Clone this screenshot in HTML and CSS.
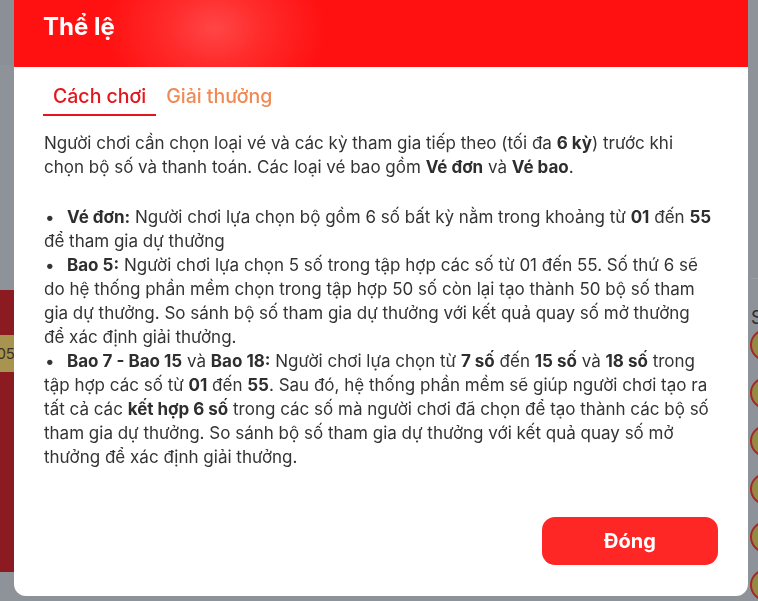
FILE: index.html
```html
<!DOCTYPE html>
<html lang="vi">
<head>
<meta charset="utf-8">
<title>Thể lệ</title>
<link rel="stylesheet" href="styles.css">
</head>
<body>
<div class="page">
  <div class="page-left">
    <div class="red-card">
      <div class="band"><span>05</span></div>
    </div>
  </div>
  <div class="page-right">
    <div class="right-letter">S</div>
    <div class="ball"></div>
    <div class="ball"></div>
    <div class="ball"></div>
    <div class="ball"></div>
    <div class="ball"></div>
    <div class="ball"></div>
  </div>
</div>

<div class="modal">
  <div class="modal-header">
    <h2 class="modal-title">Thể lệ</h2>
  </div>
  <div class="modal-body">
    <div class="tabs">
      <div class="tab tab-active">Cách chơi</div>
      <div class="tab">Giải thưởng</div>
    </div>
    <div class="content">
      <p class="intro">Người chơi cần chọn loại vé và các kỳ tham gia tiếp theo (tối đa <b>6 kỳ</b>) trước khi chọn bộ số và thanh toán. Các loại vé bao gồm <b>Vé đơn</b> và <b>Vé bao</b>.</p>
      <ul class="rules">
        <li><b>Vé đơn:</b> Người chơi lựa chọn bộ gồm 6 số bất kỳ nằm trong khoảng từ <b>01</b> đến <b>55</b> để tham gia dự thưởng</li>
        <li><b>Bao 5:</b> Người chơi lựa chọn 5 số trong tập hợp các số từ 01 đến 55. Số thứ 6 sẽ do hệ thống phần mềm chọn trong tập hợp 50 số còn lại tạo thành 50 bộ số tham gia dự thưởng. So sánh bộ số tham gia dự thưởng với kết quả quay số mở thưởng để xác định giải thưởng.</li>
        <li><b>Bao 7 - Bao 15</b> và <b>Bao 18:</b> Người chơi lựa chọn từ <b>7 số</b> đến <b>15 số</b> và <b>18 số</b> trong tập hợp các số từ <b>01</b> đến <b>55</b>. Sau đó, hệ thống phần mềm sẽ giúp người chơi tạo ra tất cả các <b>kết hợp 6 số</b> trong các số mà người chơi đã chọn để tạo thành các bộ số tham gia dự thưởng. So sánh bộ số tham gia dự thưởng với kết quả quay số mở thưởng để xác định giải thưởng.</li>
      </ul>
    </div>
    <div class="actions">
      <button class="btn-close" type="button">Đóng</button>
    </div>
  </div>
</div>
</body>
</html>
```

FILE: styles.css
```css
* { box-sizing: border-box; }

html, body {
  margin: 0;
  padding: 0;
  width: 758px;
  height: 601px;
  overflow: hidden;
}

body {
  background: #8e9299;
  font-family: Inter, "Noto Sans", sans-serif;
}

/* dimmed page behind the dialog */
.page {
  display: flex;
  justify-content: space-between;
  height: 601px;
}

.page-left {
  width: 14px;
  padding-top: 225px;
  border-top: 65px solid #8b8f96;
}

.red-card {
  height: 282px;
  background: #8c1b21;
  padding-top: 45px;
}

.band {
  height: 37px;
  background: #a8944f;
  display: flex;
  align-items: center;
  justify-content: flex-end;
  overflow: hidden;
  font-size: 15px;
  color: #3a3220;
}

.band span { margin-right: -1px; }

.page-right {
  width: 8px;
  padding-top: 278px;
  display: flex;
  flex-direction: column;
  align-items: flex-start;
}

.right-letter {
  border-top: 1px solid #9a9ea4;
  padding-top: 28px;
  font-size: 18px;
  color: #2a2d33;
  line-height: 22px;
  margin-left: 1px;
  height: 67px;
}

.ball {
  flex: none;
  width: 32px;
  height: 32px;
  border-radius: 50%;
  background: #958944;
  border: 2px solid #a3282a;
  margin-bottom: 16px;
}

/* dialog */
.modal {
  position: fixed;
  left: 14px;
  top: 0;
  width: 734px;
  background: #fff;
  border-radius: 0 0 12px 12px;
  overflow: hidden;
}

.modal-header {
  height: 67px;
  padding: 11px 29px 0;
  background: radial-gradient(ellipse 110px 85px at 201px 28px, #ff4646 0%, #ff2a2a 45%, #ff1111 100%);
}

.modal-title {
  margin: 0;
  font-size: 24px;
  line-height: 32px;
  font-weight: 700;
  color: #fff;
}

.modal-body {
  padding: 13px 30px 31px;
}

.tabs {
  display: flex;
}

.tab {
  padding: 1px 10px 3px;
  font-size: 19.5px;
  line-height: 30px;
  font-weight: 500;
  color: #f08a55;
  border-bottom: 2px solid transparent;
}

.tab-active {
  color: #e3161e;
  border-bottom-color: #e8141c;
  margin-left: -1px;
}

.content {
  margin-top: 15px;
  padding-right: 5px;
  font-size: 17px;
  line-height: 24px;
  color: #333333;
}

.content b { font-weight: 700; color: #2e2e2e; }

.intro {
  margin: 0 0 26px;
}

.rules {
  margin: 0;
  padding: 0;
  list-style: none;
}

.rules li::before {
  content: "•";
  display: inline-block;
  width: 22px;
  padding-left: 1px;
  font-weight: 400;
}

.actions {
  display: flex;
  justify-content: flex-end;
  margin-top: 48px;
}

.btn-close {
  width: 176px;
  height: 48px;
  border: 0;
  border-radius: 13px;
  background: #ff2626;
  color: #fff;
  font-family: Inter, "Noto Sans", sans-serif;
  font-size: 20px;
  font-weight: 700;
  cursor: pointer;
}
```
